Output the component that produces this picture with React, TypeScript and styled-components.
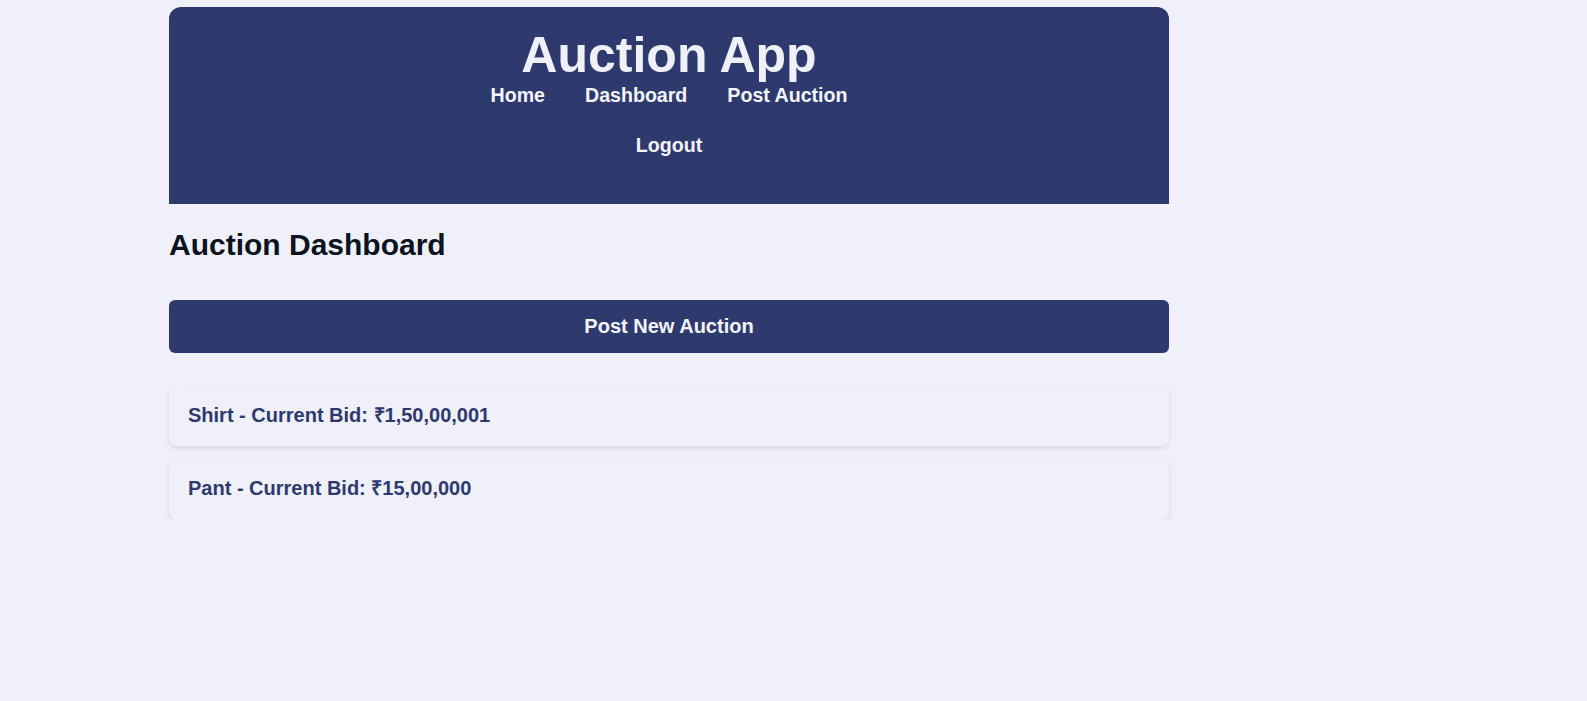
import * as React from "react";
import styled, { createGlobalStyle } from "styled-components";

const navy = "#2e3a6e";
const lavender = "#f0f0fa";

const GlobalStyle = createGlobalStyle`
  body {
    margin: 7px 8px 8px;
    background: ${lavender};
    font-family: "Liberation Sans", Arial, sans-serif;
  }
`;

const Page = styled.div`
  width: 1000px;
  margin-left: 161px;
`;

const Header = styled.header`
  background: ${navy};
  border-radius: 12px 12px 0 0;
  padding: 19px 0 47px;
  display: flex;
  flex-direction: column;
  align-items: center;
`;

const Title = styled.h1`
  margin: 0;
  font-size: 50px;
  font-weight: 700;
  color: ${lavender};
`;

const NavRow = styled.nav<{ $spaced?: boolean }>`
  display: flex;
  justify-content: center;
  gap: 40px;
  margin-top: ${p => (p.$spaced ? "27px" : "0")};
`;

const NavLink = styled.a`
  color: #f4f5fc;
  font-size: 19.6px;
  font-weight: 700;
  line-height: 23px;
  text-decoration: none;
  cursor: pointer;
`;

const Heading = styled.h2`
  margin: 24px 0 38px;
  font-size: 30px;
  font-weight: 700;
  color: #0b1320;
`;

const PrimaryButton = styled.button`
  display: block;
  width: 100%;
  height: 53px;
  border: none;
  border-radius: 6px;
  background: ${navy};
  color: #f4f5fc;
  font-family: inherit;
  font-size: 20px;
  font-weight: 700;
  cursor: pointer;
`;

const AuctionList = styled.ul`
  list-style: none;
  margin: 32px 0 0;
  padding: 0;
  display: flex;
  flex-direction: column;
  gap: 12px;
`;

const AuctionItem = styled.li`
  background: ${lavender};
  border-radius: 8px;
  box-shadow: 0 2px 5px rgba(30, 35, 80, 0.12);
  padding: 19px;
  color: ${navy};
  font-size: 20px;
  font-weight: 700;
  line-height: 23px;
`;

const auctions = [
  { id: "1", title: "Shirt", bid: 15000001 },
  { id: "2", title: "Pant", bid: 1500000 }
];

const formatBid = (n: number) => "₹" + n.toLocaleString("en-IN");

export default function App() {
  return (
    <>
      <GlobalStyle />
      <Page>
        <Header>
          <Title>Auction App</Title>
          <NavRow>
            <NavLink>Home</NavLink>
            <NavLink>Dashboard</NavLink>
            <NavLink>Post Auction</NavLink>
          </NavRow>
          <NavRow $spaced>
            <NavLink>Logout</NavLink>
          </NavRow>
        </Header>
        <Heading>Auction Dashboard</Heading>
        <PrimaryButton type="button">Post New Auction</PrimaryButton>
        <AuctionList>
          {auctions.map(a => (
            <AuctionItem key={a.id}>
              {a.title} - Current Bid: {formatBid(a.bid)}
            </AuctionItem>
          ))}
        </AuctionList>
      </Page>
    </>
  );
}
